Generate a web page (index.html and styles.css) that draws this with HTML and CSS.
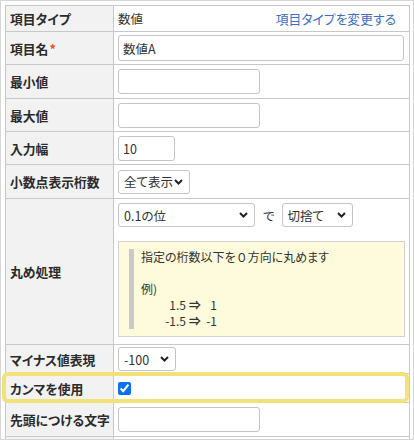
FILE: index.html
```html
<!DOCTYPE html>
<html lang="ja">
<head>
<meta charset="utf-8">
<title>項目設定</title>
<link rel="stylesheet" href="styles.css">
</head>
<body>
<div class="frame">
  <div class="form">
    <div class="row h26">
      <div class="label">項目タイプ</div>
      <div class="value split"><span>数値</span><a class="link" href="#">項目タイプを変更する</a></div>
    </div>
    <div class="row h33">
      <div class="label">項目名<span class="req">*</span></div>
      <div class="value"><input class="input full" type="text" value="数値A"></div>
    </div>
    <div class="row h34">
      <div class="label">最小値</div>
      <div class="value"><input class="input w142" type="text"></div>
    </div>
    <div class="row h33">
      <div class="label">最大値</div>
      <div class="value"><input class="input w142" type="text"></div>
    </div>
    <div class="row h33">
      <div class="label">入力幅</div>
      <div class="value"><input class="input w57" type="text" value="10"></div>
    </div>
    <div class="row h34">
      <div class="label">小数点表示桁数</div>
      <div class="value">
        <div class="select w72"><span>全て表示</span><svg class="chev" width="9" height="6" viewBox="0 0 9 6"><path d="M1 1 L4.5 4.5 L8 1" fill="none" stroke="#222" stroke-width="2"/></svg></div>
      </div>
    </div>
    <div class="row h146">
      <div class="label">丸め処理</div>
      <div class="value stack">
        <div class="line">
          <div class="select w137"><span>0.1の位</span><svg class="chev" width="9" height="6" viewBox="0 0 9 6"><path d="M1 1 L4.5 4.5 L8 1" fill="none" stroke="#222" stroke-width="2"/></svg></div>
          <span class="de">で</span>
          <div class="select w71"><span>切捨て</span><svg class="chev" width="9" height="6" viewBox="0 0 9 6"><path d="M1 1 L4.5 4.5 L8 1" fill="none" stroke="#222" stroke-width="2"/></svg></div>
        </div>
        <div class="note">
          <div class="quote">
            <div>指定の桁数以下を<span class="fw">０</span>方向に丸めます</div>
            <div>&nbsp;</div>
            <div>例)</div>
            <div class="ex"><span class="n1">1.5</span><span class="arrow">⇒</span><span class="n2">1</span></div>
            <div class="ex"><span class="n1">-1.5</span><span class="arrow">⇒</span><span class="n2">-1</span></div>
          </div>
        </div>
      </div>
    </div>
    <div class="row h29">
      <div class="label">マイナス値表現</div>
      <div class="value">
        <div class="select w58"><span>-100</span><svg class="chev" width="9" height="6" viewBox="0 0 9 6"><path d="M1 1 L4.5 4.5 L8 1" fill="none" stroke="#222" stroke-width="2"/></svg></div>
      </div>
    </div>
    <div class="row h29">
      <div class="label">カンマを使用</div>
      <div class="value"><input class="check" type="checkbox" checked></div>
      <div class="highlight"></div>
    </div>
    <div class="row h34">
      <div class="label">先頭につける文字</div>
      <div class="value"><input class="input w142" type="text"></div>
    </div>
    <div class="row h34">
      <div class="label"></div>
      <div class="value"></div>
    </div>
  </div>
</div>
</body>
</html>
```
FILE: styles.css
```css
* { box-sizing: border-box; }
html, body { margin: 0; padding: 0; background: #fff; }
body {
  font-family: "Noto Sans CJK JP", "Noto Sans", sans-serif;
  font-size: 12.5px;
  color: #333;
  font-feature-settings: "palt";
}
.frame {
  width: 414px;
  height: 440px;
  border: 1px solid #d6d6d6;
  padding: 4px 3px 0 4px;
  overflow: hidden;
}
.form {
  width: 405px;
  border-top: 1px solid #c8c8c8;
  border-left: 1px solid #c8c8c8;
}
.row {
  display: grid;
  grid-template-columns: 108px 296px;
  border-bottom: 1px solid #c8c8c8;
  position: relative;
}
.h26 { height: 26px; }
.h29 { height: 29px; }
.h33 { height: 33px; }
.h34 { height: 34px; }
.h146 { height: 146px; }
.label {
  background: #f2f2f2;
  border-right: 1px solid #c8c8c8;
  padding-left: 4px;
  display: flex;
  align-items: center;
  font-weight: bold;
  font-size: 12.8px;
  color: #2b2b2b;
  white-space: nowrap;
}
.req { color: #e5541e; margin-left: 1px; }
.value {
  border-right: 1px solid #c8c8c8;
  padding: 0 4px;
  display: flex;
  align-items: center;
}
.split { justify-content: space-between; }
.link {
  color: #3a6fc2;
  text-decoration: none;
  margin-right: 9px;
  font-size: 12.8px;
}
.input {
  height: 25px;
  border: 1px solid #c4c4c4;
  border-radius: 3px;
  padding: 0 4px;
  font-family: "Noto Sans CJK JP", "Noto Sans", sans-serif;
  font-size: 12.5px;
  font-feature-settings: "palt";
  color: #333;
  background: #fff;
  outline: none;
}
.full { width: 286px; height: 26px; }
.w142 { width: 142px; }
.w57 { width: 57px; }
.select {
  height: 24px;
  border: 1px solid #c4c4c4;
  border-radius: 3px;
  background: #fff;
  display: flex;
  align-items: center;
  justify-content: space-between;
  padding: 0 6px 0 5px;
  color: #333;
  white-space: nowrap;
}
.chev { flex: none; }
.w72 { width: 72px; }
.w137 { width: 137px; }
.w71 { width: 71px; }
.w58 { width: 58px; }
.stack {
  flex-direction: column;
  align-items: stretch;
  justify-content: flex-start;
  padding-top: 4px;
}
.line {
  display: flex;
  align-items: center;
}
.de { margin: 0 7px 0 8px; }
.note {
  margin-top: 14px;
  border: 1px solid #d2d2d2;
  background: #fdfbdb;
  padding: 7px 10px;
}
.quote {
  border-left: 5px solid #c9c9c9;
  padding-left: 7px;
  font-size: 12px;
  line-height: 16px;
}
.fw { font-feature-settings: normal; }
.ex { display: flex; align-items: center; }
.n1 { display: inline-block; width: 45px; text-align: right; }
.arrow { display: inline-block; margin: 0 2px 0 3px; font-size: 12px; font-weight: bold; font-feature-settings: normal; }
.n2 { display: inline-block; width: 14px; text-align: right; }
.check {
  margin: 0;
  width: 13px;
  height: 13px;
  accent-color: #0a6ff5;
}
.highlight {
  position: absolute;
  left: -4px;
  top: -2px;
  width: 407px;
  height: 31px;
  border: 4px solid #f3e277;
  border-radius: 6px;
  pointer-events: none;
}
```
